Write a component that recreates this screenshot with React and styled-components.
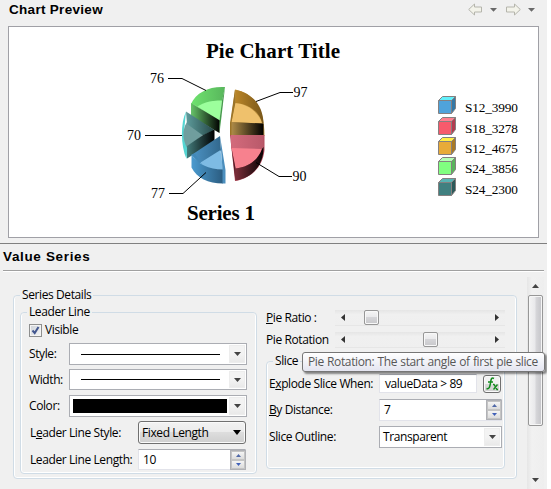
import React from 'react';
import styled, { createGlobalStyle } from 'styled-components';

const Global = createGlobalStyle`
  * { box-sizing: border-box; }
  body {
    margin: 0;
    background: #fff;
    overflow: hidden;
    font: 12px/16px "Open Sans", "Noto Sans", sans-serif;
    letter-spacing: -0.4px;
    color: #000;
  }
`;

const Window = styled.main`
  position: relative;
  width: 547px;
  height: 489px;
  background: #f0f0f0;
  display: flex;
  flex-direction: column;
  overflow: hidden;
`;

const Header = styled.header`
  height: 26px;
  padding: 0 11px 6px 9px;
  display: flex;
  align-items: center;
  justify-content: space-between;
`;

const Heading = styled.h2`
  margin: 0;
  font: bold 13.5px/16px "Liberation Sans", Arial, sans-serif;
  letter-spacing: ${(p) => p.$spacing || 0.3}px;
  white-space: nowrap;
`;

const Preview = styled.section`
  margin: 0 8px;
  width: 531px;
  height: 212px;
  border: 1px solid #a0a0a6;
  background: #fff;
  svg { display: block; letter-spacing: 0; }
`;

const SeriesHeader = styled.div`
  margin-top: 5px;
  height: 27px;
  padding: 5px 0 0 3px;
  border-top: 1px solid #808080;
`;

const Rule = styled.div`
  margin-left: 3px;
  width: 541px;
  height: 2px;
  flex: none;
  background: #a0a0a0;
  border-bottom: 1px solid #fff;
`;

const Body = styled.section`
  flex: 1;
  display: flex;
  justify-content: space-between;
  padding: 5px 4px 0 13px;
`;

const Group = styled.fieldset`
  width: ${(p) => p.$w}px;
  height: ${(p) => p.$h}px;
  min-width: 0;
  flex: none;
  margin: ${(p) => p.$m || '0'};
  padding: ${(p) => p.$p || '0'};
  border: 1px solid #d0dce6;
  border-radius: 4px;
  box-shadow: inset 0 -1px #fff, inset 1px 0 #fff, inset -1px 0 #fff;
`;

const Legend = styled.legend`
  margin-left: ${(p) => p.$left || 0}px;
  padding: 0 2px;
  height: 16px;
  line-height: 16px;
  white-space: nowrap;
`;

const Columns = styled.div`
  display: flex;
  gap: 9px;
`;

const Row = styled.div`
  display: flex;
  align-items: center;
  height: ${(p) => p.$h}px;
  margin-top: ${(p) => p.$gap || 0}px;
  padding-left: ${(p) => p.$pad || 0}px;
`;

const Label = styled.span`
  width: ${(p) => p.$w}px;
  flex: none;
  white-space: nowrap;
  u { text-underline-offset: 1px; }
`;

const Check = styled.span`
  width: 13px;
  height: 13px;
  margin-right: 3px;
  border: 1px solid #8e8f8f;
  background: linear-gradient(135deg, #cdd2d8, #f4f5f6);
  box-shadow: inset 0 0 0 1px #f4f4f4;
  svg { display: block; }
`;

const Combo = styled.div`
  display: flex;
  align-items: center;
  width: ${(p) => p.$w}px;
  height: ${(p) => p.$h}px;
  padding: 1px 1px 1px 3px;
  border: 1px solid #abadb3;
  background: #fff;
  justify-content: space-between;
  white-space: nowrap;
`;

const DropArrow = styled.span`
  width: 16px;
  height: 100%;
  flex: none;
  display: grid;
  place-items: center;
  background: linear-gradient(#f3f3f3 50%, #e9e9e9);
  border: 1px solid #ededed;
`;

const Stroke = styled.span`
  width: 139px;
  height: 1px;
  margin-left: 8px;
  background: #000;
`;

const Swatch = styled.span`
  width: 154px;
  height: 14px;
  background: #000;
`;

const PushCombo = styled.button`
  display: flex;
  align-items: center;
  justify-content: space-between;
  width: 108px;
  height: 23px;
  padding: 0 4px 0 3px;
  border: 1px solid #707070;
  border-radius: 3px;
  background: linear-gradient(#f2f2f2, #ebebeb 48%, #dddddd 50%, #cfcfcf);
  box-shadow: inset 0 0 0 1px #fafafa;
  font: inherit;
  letter-spacing: inherit;
  color: #000;
  white-space: nowrap;
`;

const Field = styled.div`
  display: flex;
  align-items: center;
  justify-content: space-between;
  width: ${(p) => p.$w}px;
  height: ${(p) => p.$h}px;
  padding: 0 0 0 ${(p) => p.$pad || 4}px;
  border: 1px solid #e2e3ea;
  border-top-color: #abadb3;
  background: #fff;
  white-space: nowrap;
`;

const SpinBox = styled.span`
  width: 16px;
  height: 20px;
  margin-right: -1px;
  display: flex;
  flex-direction: column;
  border: 1px solid #b0b1b6;
  background: #fff;
`;

const SpinButton = styled.span`
  flex: 1;
  display: grid;
  place-items: center;
  background: linear-gradient(#f4f4f4, #dcdcdc);
  border: 1px solid #c4c4c4;
`;

const FxButton = styled.button`
  width: 18px;
  height: 18px;
  margin-left: 6px;
  padding: 0;
  border: 1px solid #707070;
  border-radius: 3px;
  background: linear-gradient(#f2f2f2 48%, #dadada 50%, #d0d0d0);
  box-shadow: inset 0 0 0 1px #fafafa;
  svg { display: block; }
`;

const Track = styled.div`
  display: flex;
  align-items: center;
  width: 170px;
  height: 16px;
  padding: 0 6px;
  background: linear-gradient(#e5e5e5, #f0f0f0 30%, #efefef);
  border-bottom: 1px solid #e6e6e6;
`;

const Thumb = styled.span`
  width: 15px;
  height: 15px;
  margin-left: ${(p) => p.$left}px;
  margin-right: auto;
  border: 1px solid #979797;
  border-radius: 2px;
  background: linear-gradient(#f5f5f5, #e9e9eb 48%, #d5d5d8 50%, #c8c8cb);
  box-shadow: inset 0 0 0 1px #f8f8f8;
`;

const ScrollBar = styled.div`
  width: 17px;
  margin-right: -1px;
  display: flex;
  flex-direction: column;
  align-items: center;
  background: linear-gradient(90deg, #e6e6e6, #f1f1f1 30%, #eeeeee);
`;

const ScrollEnd = styled.span`
  height: 18px;
  display: grid;
  place-items: center;
`;

const ScrollThumb = styled.span`
  width: 15px;
  height: 131px;
  margin-bottom: auto;
  border: 1px solid #979797;
  border-radius: 2px;
  background: linear-gradient(90deg, #f4f4f4, #e9e9eb 45%, #d6d6d9 55%, #c4c4c8);
  box-shadow: inset 0 0 0 1px #f6f6f6;
`;

const Tooltip = styled.div`
  position: absolute;
  left: 302px;
  top: 352px;
  width: 243px;
  height: 20px;
  padding: 1px 0 0 5px;
  border: 1px solid #767676;
  border-radius: 3px;
  background: linear-gradient(#fff, #e4e5f0);
  box-shadow: 2px 2px 2px rgba(0, 0, 0, 0.45);
  color: #575757;
  white-space: nowrap;
  letter-spacing: -0.38px;
  word-spacing: 0.5px;
`;

const paths = {
  down: 'M0 0H7L3.5 4Z',
  up: 'M0 4H7L3.5 0Z',
};

const Tri = ({ dir = 'down', color = '#444', w = 7, h = 4 }) => (
  <svg width={w} height={h} viewBox="0 0 7 4" preserveAspectRatio="none">
    <path d={paths[dir]} fill={color} />
  </svg>
);

const SideTri = ({ right }) => (
  <svg width="4" height="7" viewBox="0 0 4 7">
    <path d={right ? 'M0 0V7L4 3.5Z' : 'M4 0V7L0 3.5Z'} fill="#333" />
  </svg>
);

const NavIcons = () => (
  <svg width="68" height="14" viewBox="0 0 68 14">
    <g fill="#f3f3ea" stroke="#b5b5ac" strokeLinejoin="round">
      <path d="M.7 6.5L6.5 1V4H13.5V9H6.5V12Z" />
      <path d="M52.3 6.5L46.5 1V4H38.5V9H46.5V12Z" />
    </g>
    <path d="M22 5H29L25.5 8.7ZM60 5H67L63.5 8.7Z" fill="#696969" />
  </svg>
);

const Spin = () => (
  <SpinBox>
    <SpinButton><Tri dir="up" color="#5068a8" w={5} h={3} /></SpinButton>
    <SpinButton><Tri color="#4060b8" w={5} h={3} /></SpinButton>
  </SpinBox>
);

const Slider = ({ left }) => (
  <Track>
    <SideTri />
    <Thumb $left={left} />
    <SideTri right />
  </Track>
);

const legend = [
  ['S12_3990', 97, '#4fa3db', '#62f0fb', '#3478a6'],
  ['S18_3278', 118, '#f75a6c', '#ff8090', '#b23c50'],
  ['S12_4675', 138, '#e8ab38', '#fff046', '#a97a24'],
  ['S24_3856', 158, '#80ff80', '#b4ffb4', '#58b45c'],
  ['S24_2300', 179, '#408080', '#58b4b4', '#2c5a5a'],
];

const callouts = [
  ['76', 150, 83, 'M168 78.5H182L206 90.5'],
  ['97', 293.5, 97, 'M293 92.5H280L256 101.5'],
  ['70', 127, 140, 'M145 135.5H182'],
  ['77', 151, 198, 'M169 193.5H183L206 172.5'],
  ['90', 292.5, 181, 'M292 176.5H279L256 162.5'],
];

const gradients = [
  ['goldRim', '#b98528', '#79571a'],
  ['goldCut', '#b4904a', '#000000'],
  ['redRim', '#7c2e39', '#080304'],
  ['greenRim', '#6fe36f', '#58b65c'],
  ['greenCut', '#67c46a', '#000000'],
  ['tealTop', '#5e9c9c', '#254747'],
  ['tealCut', '#437b7b', '#000000'],
  ['blueRim', '#4b9bd0', '#2b5c80'],
  ['blueTop', '#4d94c6', '#32688d'],
  ['redTop', '#d36b7c', '#b9596a'],
];

const Chart = () => (
  <svg width="529" height="210" viewBox="9 27 529 210" fontFamily='"Liberation Serif", "Times New Roman", serif'>
    <defs>
      {gradients.map(([id, a, b]) => (
        <linearGradient key={id} id={id}>
          <stop offset="0" stopColor={a} />
          <stop offset="1" stopColor={b} />
        </linearGradient>
      ))}
    </defs>
    <g fontWeight="bold" fontSize="21">
      <text x="206" y="58" textLength="134">Pie Chart Title</text>
      <text x="187" y="220" textLength="68">Series 1</text>
    </g>

    {/* gold slice */}
    <path d="M235 89.5C253 93 264.5 107 264.5 136H230.5L230.5 124Z" fill="#bd923f" />
    <path d="M235.5 90C252 93 263 105 263.5 123H262C260 113 250 104 235.5 103Z" fill="url(#goldRim)" />
    <path d="M235 103C249 104 260 114 262 123.5L231.5 122Z" fill="#efc16c" />
    <path d="M230.5 122L263.5 123.5V135.5H230.5Z" fill="url(#goldCut)" />
    <path d="M235 89.5L235.4 103L231.5 122V135H230V123Z" fill="#9b7429" />
    {/* red slice */}
    <path d="M230 135H264.5V150C263 166 252 178 235 181Z" fill="#b54c5c" />
    <path d="M231 135H263.5V149H231Z" fill="url(#redTop)" />
    <path d="M231.5 148L262 149C258 160 249 167 235.5 168.5Z" fill="#f7818e" />
    <path d="M262 149L263.5 147C264 164 253 178 235.5 180.5V168.5C249 167 258 160 262 149Z" fill="url(#redRim)" />
    <path d="M230 135L231.5 148L235.5 168V181Z" fill="#541e27" />
    {/* green slice */}
    <path d="M191 104C196 92 210 86 225 87L222 101C210 101 201 104 197 109Z" fill="url(#greenRim)" />
    <path d="M195 109C200 103 210 100.5 222 100.5L219.5 120.5Z" fill="#9cff9c" />
    <path d="M191 103L220 120.5L219.5 133L191 116.5Z" fill="url(#greenCut)" />
    <path d="M191 103L197 106L204 111Z" fill="#86e486" />
    <path d="M225 87L219.5 133V120L222 100.5Z" fill="#469b4c" />
    {/* teal slice */}
    <path d="M186 111.5C180.5 123 180.5 145 186.5 159L188 146L184 132Z" fill="#55d5d2" />
    <path d="M187 122C181.5 131 183 140 187 148L204 134Z" fill="#709e9e" />
    <path d="M186 111.5L214.5 130L203 135.5L187 124Z" fill="url(#tealTop)" />
    <path d="M214.5 129.5V141.5L187 158.5V146L203 135Z" fill="url(#tealCut)" />
    {/* blue slice */}
    <path d="M191.5 155L220 136L221 151L201 163V167Z" fill="url(#blueTop)" />
    <path d="M199 163.5L220.5 150L223 170C213 170 204 168 199 163.5Z" fill="#7ebbe4" />
    <path d="M191.5 154.5C197 164 209 169.5 223 169.5V183.5C208 183.5 197 178 191.5 167.5Z" fill="url(#blueRim)" />
    <path d="M191.5 154.5L195 153.5L202 164.5Z" fill="#4289b8" />
    <path d="M220 136L225.5 170V183.5H222.5V169.5Z" fill="#4c8fbe" />

    <g fontSize="14">
      {callouts.map(([label, x, y, d]) => (
        <React.Fragment key={label}>
          <path d={d} fill="none" stroke="#000" />
          <text x={x} y={y}>{label}</text>
        </React.Fragment>
      ))}
    </g>

    {legend.map(([label, y, front, top, side]) => (
      <g key={label} strokeLinejoin="round">
        <g stroke="#858080">
          <path d={`M438.5 ${y + 3.5}L442.5 ${y - 0.5}H455.5L451.5 ${y + 3.5}Z`} fill={top} />
          <path d={`M451.5 ${y + 3.5}L455.5 ${y - 0.5}V${y + 11.5}L451.5 ${y + 16.5}Z`} fill={side} />
          <rect x="438.5" y={y + 3.5} width="13" height="13" fill={front} />
        </g>
        <text x="465" y={y + 14.5} textLength="53" fontSize="13.3">{label}</text>
      </g>
    ))}
  </svg>
);

export default function App() {
  return (
    <>
      <Global />
      <Window>
        <Header>
          <Heading>Chart Preview</Heading>
          <NavIcons />
        </Header>
        <Preview><Chart /></Preview>
        <SeriesHeader><Heading $spacing={0.65}>Value Series</Heading></SeriesHeader>
        <Rule />
        <Body>
          <Group $w={504} $h={192} $m="10px 0 0" $p="1px 0 0 6px">
            <Legend>Series Details</Legend>
            <Columns>
              <Group $w={237} $h={170} $p="0 0 0 8px">
                <Legend $left={-2}>Leader Line</Legend>
                <Row $h={16} $gap={2}>
                  <Check>
                    <svg width="11" height="11" viewBox="0 0 11 11">
                      <path d="M2.5 5.5L4.7 8L8.5 2" fill="none" stroke="#42568f" strokeWidth="2" />
                    </svg>
                  </Check>
                  <Label>Visible</Label>
                </Row>
                <Row $h={22} $gap={5}>
                  <Label $w={40}>Style:</Label>
                  <Combo $w={178} $h={22}><Stroke /><DropArrow><Tri /></DropArrow></Combo>
                </Row>
                <Row $h={21} $gap={4}>
                  <Label $w={40}>Width:</Label>
                  <Combo $w={178} $h={21}><Stroke /><DropArrow><Tri /></DropArrow></Combo>
                </Row>
                <Row $h={22} $gap={5}>
                  <Label $w={40}>Color:</Label>
                  <Combo $w={178} $h={22}><Swatch /><DropArrow><Tri /></DropArrow></Combo>
                </Row>
                <Row $h={23} $gap={4} $pad={1}>
                  <Label $w={108}>L<u>e</u>ader Line Style:</Label>
                  <PushCombo>Fixed Length<Tri color="#000" w={8} h={5} /></PushCombo>
                </Row>
                <Row $h={21} $gap={5} $pad={1}>
                  <Label $w={108}>Leader Line Length:</Label>
                  <Field $w={108} $h={21}>10<Spin /></Field>
                </Row>
              </Group>
              <div>
                <Row $h={16} $gap={6}>
                  <Label $w={69}><u>P</u>ie Ratio :</Label>
                  <Slider left={19} />
                </Row>
                <Row $h={16} $gap={6}>
                  <Label $w={69}>Pie Rotation</Label>
                  <Slider left={78} />
                </Row>
                <Group $w={239} $h={116} $m="5px 0 0" $p="0 0 0 2px">
                  <Legend $left={4}>Slice</Legend>
                  <Row $h={19} $gap={5}>
                    <Label $w={110}>E<u>x</u>plode Slice When:</Label>
                    <Field $w={98} $h={19} $pad={5}>valueData &gt; 89</Field>
                    <FxButton>
                      <svg width="16" height="16" viewBox="0 0 16 16" fill="none" stroke="#138a1e">
                        <path d="M10 2.5C7 1 7 4 6.5 7S5.5 13.5 2.5 12.5" strokeWidth="1.5" />
                        <path d="M4 6H9M9 8.5H10L13 13.5H14M13.5 8.5L9.5 13.5" strokeWidth="1.3" />
                      </svg>
                    </FxButton>
                  </Row>
                  <Row $h={22} $gap={6}>
                    <Label $w={110}><u>B</u>y Distance:</Label>
                    <Field $w={123} $h={22}>7<Spin /></Field>
                  </Row>
                  <Row $h={22} $gap={5}>
                    <Label $w={110}>Slice Outline:</Label>
                    <Combo $w={123} $h={22}>Transparent<DropArrow><Tri /></DropArrow></Combo>
                  </Row>
                </Group>
              </div>
            </Columns>
          </Group>
          <ScrollBar>
            <ScrollEnd><Tri dir="up" /></ScrollEnd>
            <ScrollThumb />
            <ScrollEnd><Tri /></ScrollEnd>
          </ScrollBar>
        </Body>
        <Tooltip>Pie Rotation: The start angle of first pie slice</Tooltip>
      </Window>
    </>
  );
}
